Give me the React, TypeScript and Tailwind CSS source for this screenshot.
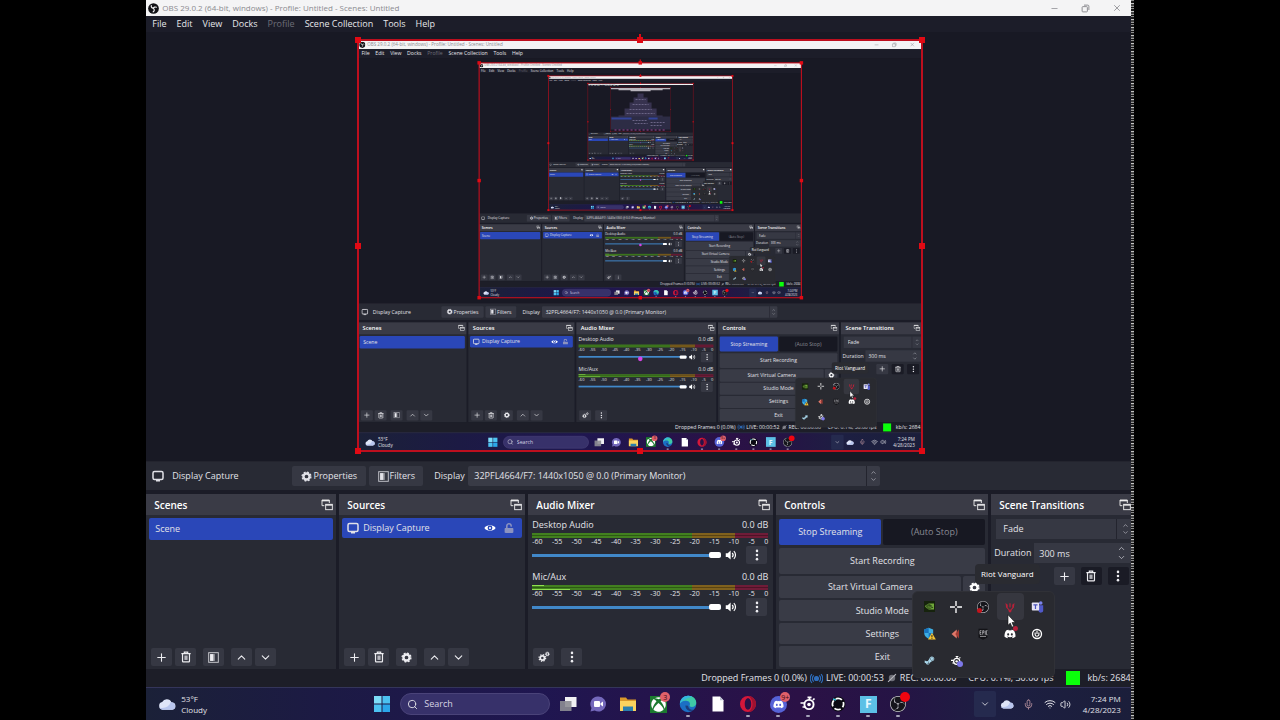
import type { ReactNode } from "react";
import { ChevronDown, ChevronUp, Mic, Minus, Plus, Search, Volume2, Wifi, X } from "lucide-react";
import { FaDiscord, FaSteamSymbol, FaUnlock, FaXbox } from "react-icons/fa";
import { SiNvidia, SiObsstudio } from "react-icons/si";

// how many times the display capture repeats inside itself
const MAX_LEVEL = 4;

const ticks = ["-60", "-55", "-50", "-45", "-40", "-35", "-30", "-25", "-20", "-15", "-10", "-5", "0"];

/* ---------- icons ---------- */

function GearIcon({ size = 11 }: { size?: number }) {
  return (
    <svg width={size} height={size} viewBox="0 0 16 16" fill="none" stroke="currentColor">
      <circle cx="8" cy="8" r="4.4" strokeWidth="3.4" />
      <circle cx="8" cy="8" r="6.4" strokeWidth="2" strokeDasharray="2.8 2.23" />
    </svg>
  );
}

function GearsIcon() {
  return (
    <svg width="12" height="12" viewBox="0 0 18 18" fill="none" stroke="currentColor">
      <circle cx="6.5" cy="10.5" r="3.2" strokeWidth="2.6" />
      <circle cx="6.5" cy="10.5" r="5" strokeWidth="1.8" strokeDasharray="2 1.93" />
      <circle cx="14" cy="4.5" r="2" strokeWidth="1.6" />
      <circle cx="14" cy="4.5" r="3" strokeWidth="1.2" strokeDasharray="1.2 1.16" />
    </svg>
  );
}

function MonitorIcon() {
  return (
    <svg width="12" height="12" viewBox="0 0 24 24" fill="none" stroke="currentColor" strokeWidth="3">
      <rect x="2" y="3" width="20" height="16" rx="3" />
      <path d="M8 21.5h8" />
    </svg>
  );
}

function FilterIcon() {
  return (
    <svg width="11" height="11" viewBox="0 0 16 16">
      <rect x="1" y="1" width="14" height="14" fill="none" stroke="currentColor" strokeWidth="1.4" opacity="0.8" />
      <rect x="3" y="3" width="5" height="10" fill="currentColor" />
      <rect x="8" y="3" width="2" height="10" fill="currentColor" opacity="0.5" />
    </svg>
  );
}

function TrashIcon() {
  return (
    <svg width="12" height="12" viewBox="0 0 18 18" fill="none" stroke="currentColor" strokeWidth="1.8">
      <path d="M2 4h14M6.5 3.5V1.8h5v1.7M3.8 4v11.2c0 .6.5 1 1 1h8.4c.5 0 1-.4 1-1V4" />
      <rect x="6.6" y="6.8" width="4.8" height="6.6" fill="currentColor" stroke="none" opacity="0.7" />
    </svg>
  );
}

function PopOutIcon() {
  return (
    <svg width="12" height="12" viewBox="0 0 18 18" fill="none" stroke="currentColor" strokeWidth="1.4" opacity="0.9">
      <path d="M5 10H1.5V1.5h11V6" />
      <path d="M1.5 2.5h11" strokeWidth="2" />
      <rect x="7" y="8" width="10" height="8" />
      <path d="M7 9h10" strokeWidth="2" />
    </svg>
  );
}

function DotsIcon() {
  return (
    <svg width="12" height="12" viewBox="0 0 16 16" fill="currentColor">
      <circle cx="8" cy="2.5" r="1.7" />
      <circle cx="8" cy="8" r="1.7" />
      <circle cx="8" cy="13.5" r="1.7" />
    </svg>
  );
}

function EyeIcon() {
  return (
    <svg width="12" height="12" viewBox="0 0 16 16">
      <path d="M0.5 8C3 3.2 13 3.2 15.5 8 13 12.8 3 12.8 .5 8z" fill="currentColor" />
      <circle cx="8" cy="8" r="3.2" fill="#2a47b8" />
      <circle cx="8" cy="8" r="1.4" fill="currentColor" />
    </svg>
  );
}

function SpeakerIcon() {
  return (
    <svg width="12" height="12" viewBox="0 0 16 16" fill="none" stroke="currentColor" strokeWidth="1.6">
      <path d="M1 5.5h2.6L7.5 2v12L3.6 10.5H1z" fill="currentColor" stroke="none" />
      <path d="M9.6 5.2c1.4 1.5 1.4 4.1 0 5.6M11.8 2.8c2.9 2.8 2.9 7.6 0 10.4" />
    </svg>
  );
}

function CloudIcon({ size }: { size: number }) {
  return (
    <svg width={size} height={size} viewBox="0 0 16 16">
      <path d="M4 13a3.4 3.4 0 0 1-.3-6.7A4.6 4.6 0 0 1 12 6.600 3.200 3.200 0 0 1 12.600 13z" fill="#dfe5f8" />
      <path d="M4 13a3.400 3.400 0 0 1-2.900-2c4 1.600 9-.4 10-4.500A3.300 3.300 0 0 1 12.600 13z" fill="#b9c6ee" />
    </svg>
  );
}

/* ---------- taskbar app icons ---------- */

function WindowsLogo() {
  return (
    <svg width="18" height="18" viewBox="0 0 18 18" fill="#4cc2f1">
      <rect x="1" y="1" width="7.500" height="7.500" fill="#7ddcf8" />
      <rect x="9.500" y="1" width="7.500" height="7.500" />
      <rect x="1" y="9.500" width="7.500" height="7.500" />
      <rect x="9.500" y="9.500" width="7.500" height="7.500" fill="#2ba6ea" />
    </svg>
  );
}

function TaskViewIcon() {
  return (
    <svg width="18" height="18" viewBox="0 0 18 18">
      <rect x="6" y="2" width="11.500" height="10" fill="#f1f1f3" />
      <rect x="1" y="6" width="11.500" height="10" fill="#8d8d93" opacity="0.9" />
    </svg>
  );
}

function ChatIcon() {
  return (
    <svg width="18" height="18" viewBox="0 0 18 18">
      <path d="M9.500 1.500a7.500 7.500 0 1 1-3.800 14L1.500 16.500l1-3.600A7.500 7.500 0 0 1 9.500 1.500z" fill="#7468bb" />
      <rect x="5" y="6" width="6" height="6" rx="1" fill="#fff" />
      <path d="M11.500 8.300 14 6.500v5l-2.500-1.800z" fill="#fff" />
    </svg>
  );
}

function FolderIcon() {
  return (
    <svg width="18" height="18" viewBox="0 0 18 18">
      <path d="M1 2.500h6l1.500 2H17V15H1z" fill="#d9982a" />
      <path d="M1 6h16v10H1z" fill="#fbd35e" />
      <path d="M4 16v-4.500h10V16z" fill="#2a7fae" />
    </svg>
  );
}

function EdgeIcon() {
  return (
    <svg width="18" height="18" viewBox="0 0 18 18">
      <circle cx="9" cy="9" r="8.300" fill="#1b6fc4" />
      <path d="M1 8.500C1.500 3.500 5 .7 9.200.7c4.800 0 8.100 3.300 8.100 7 0 2.600-2 4.300-4.400 4.300-1.700 0-2.600-.7-2.400-1.400.9-1 .8-4-2.300-4.600C5 5.400 2 6.500 1 8.500z" fill="#3fc9a6" />
      <path d="M1 8.500C1.500 3.500 5 .7 9.200.7c1.500 0 3 .4 4.200 1C9 2.500 4 4.500 1 8.500z" fill="#35b6e0" />
      <path d="M6.500 10.500c-.3 3 2.200 5.600 5.500 5.500 1.400 0 2.500-.5 3.400-1.200-2.900.4-6-.8-6.400-4.100z" fill="#1d1445" opacity="0.55" />
    </svg>
  );
}

function FileIcon() {
  return (
    <svg width="18" height="18" viewBox="0 0 18 18">
      <path d="M3.500 1.500h7.500l3.500 3.700v11.300h-11z" fill="#fff" />
      <path d="M11 1.500v3.700h3.500z" fill="#b9bfd0" />
    </svg>
  );
}

function OperaIcon() {
  return (
    <svg width="18" height="18" viewBox="0 0 18 18">
      <path fillRule="evenodd" d="M9 1a8 8 0 1 0 0 16A8 8 0 0 0 9 1zm0 2.300c2 0 3.200 2.500 3.200 5.700S11 14.700 9 14.700 5.800 12.200 5.800 9 7 3.300 9 3.300z" fill="#d4173a" />
      <path d="M9 1a8 8 0 0 1 0 16c2.500-1 4.500-4 4.500-8S11.500 2 9 1z" fill="#9d1230" />
    </svg>
  );
}

function SteelSeriesIcon({ size }: { size: number }) {
  return (
    <svg width={size} height={size} viewBox="0 0 18 18" fill="none" stroke="#fff">
      <circle cx="10" cy="9.500" r="4.600" strokeWidth="1.900" />
      <circle cx="10" cy="9.500" r="1.800" fill="#fff" stroke="none" />
      <path d="M8.500 2.300h4M10.500 2v3M1.500 8h4M3.500 12h3M14 5l1.500-1.500" strokeWidth="1.700" />
    </svg>
  );
}

function RingIcon() {
  return (
    <svg width="18" height="18" viewBox="0 0 18 18" fill="none">
      <circle cx="9" cy="9" r="7.500" fill="#0b0a12" />
      <circle cx="9" cy="9" r="5.600" stroke="#fff" strokeWidth="1.800" strokeDasharray="6.500 2.300" strokeDashoffset="3" />
      <path d="M4 4l3 1" stroke="#3fc1d8" strokeWidth="1.400" />
    </svg>
  );
}

function FortniteIcon() {
  return (
    <span className="flex size-[17px] items-center justify-center bg-[#5cc0e6] text-[12px] leading-none font-bold text-[#e6f8ff]">F</span>
  );
}

function ObsIcon({ size }: { size: number }) {
  return (
    <span className="flex rounded-full bg-[#15151b] text-[#c9c9cf]">
      <SiObsstudio size={size} />
    </span>
  );
}

function ObsWindowIcon() {
  return (
    <svg width="11" height="11" viewBox="0 0 16 16" fill="none" stroke="#f4f4f5" strokeWidth="1.700" strokeLinecap="round">
      <circle cx="8" cy="8" r="7.800" fill="#121216" stroke="none" />
      <path d="M4.800 3.800c-.4 2.200.8 3.500 2.600 3.700M12.200 6.200c-1.900-.9-3.700-.3-4.300 1.500M7.600 12.800c1.700-1.200 2-3 .8-4.400" />
    </svg>
  );
}

/* ---------- hidden icons flyout ---------- */

function VanguardIcon() {
  return (
    <svg width="12" height="12" viewBox="0 0 16 16" fill="#b92139">
      <path d="M2 2.500 5 5v4l3 3 3-3V5l3-2.500-.8 6L10 12v1.500L8 15.500 6 13.500V12L2.800 8.500z" />
      <path d="M7.200 3h1.600v5L8 9l-.8-1z" />
    </svg>
  );
}

function TeamsIcon() {
  return (
    <svg width="13" height="13" viewBox="0 0 16 16">
      <circle cx="12" cy="3.600" r="2.200" fill="#7b83eb" />
      <path d="M8 6.500h7v5.500a3 3 0 0 1-6 1z" fill="#5059c9" />
      <rect x="1" y="3" width="9" height="10" rx="1" fill="#e6e4f6" />
      <path d="M3 6h5M5.500 6v5" stroke="#4b53bc" strokeWidth="1.500" />
    </svg>
  );
}

function DefenderIcon() {
  return (
    <svg width="13" height="13" viewBox="0 0 16 16">
      <path d="M7 1 1.500 3v4.500c0 3.500 2.500 5.500 5.500 7 3-1.500 5.500-3.500 5.500-7V3z" fill="#3daee4" />
      <path d="M7 1v6.500H1.500V3zM7 7.500h5.500c0 3.500-2.500 5.500-5.500 7z" fill="#1873bd" />
      <path d="m11 7 4.800 8.500H6.200z" fill="#f5c433" />
      <path d="M11 9.800v3M11 13.600v1" stroke="#222" strokeWidth="1.200" />
    </svg>
  );
}

function EpicIcon() {
  return (
    <svg width="12" height="12" viewBox="0 0 16 16">
      <path d="M2 1h12v11.500L8 15.500l-6-3z" fill="#131317" />
      <path d="M6 3.500H4v5h2M4 6h1.700M7.600 9V3.500h1.600v2.700H7.600M11 3.500V9M14 3.500h-1.500V9H14M4 11.200h8" stroke="#b9b9be" strokeWidth="1" fill="none" />
    </svg>
  );
}

function PowerRingIcon() {
  return (
    <svg width="12" height="12" viewBox="0 0 16 16" fill="none" stroke="#fff">
      <circle cx="8" cy="8" r="6" strokeWidth="1.800" />
      <path d="M5.500 6v2.500a2.500 2.500 0 0 0 5 0V6M8 3.500V8" strokeWidth="1.500" />
    </svg>
  );
}

function CrosshairIcon() {
  return (
    <svg width="12" height="12" viewBox="0 0 16 16" stroke="#fff" strokeWidth="1.800">
      <path d="M8 0v6.500M8 9.500V16M0 8h6.500M9.500 8H16" />
    </svg>
  );
}

function CursorIcon() {
  return (
    <svg width="9" height="14" viewBox="0 0 9 14">
      <path d="M1 .8v10.400l2.300-2.100 1.700 4 1.700-.7-1.700-3.900h3.200z" fill="#fff" stroke="#111" strokeWidth="0.600" />
    </svg>
  );
}

const trayItems: { name: string; icon: ReactNode; hover?: boolean }[] = [
  { name: "NVIDIA Settings", icon: <span className="flex bg-[#16230d] p-px text-[#6fa83a]"><SiNvidia size={9} /></span> },
  { name: "Crosshair", icon: <CrosshairIcon /> },
  {
    name: "OBS",
    icon: (
      <span className="relative">
        <ObsIcon size={12} />
        <span className="absolute bottom-0 left-0 size-[5px] rounded-full bg-[#c3141c]" />
      </span>
    ),
  },
  { name: "Riot Vanguard", icon: <VanguardIcon />, hover: true },
  { name: "Microsoft Teams", icon: <TeamsIcon /> },
  { name: "Windows Security", icon: <DefenderIcon /> },
  {
    name: "Red arrow",
    icon: (
      <svg width="12" height="12" viewBox="0 0 16 16">
        <path d="M9 2v12L2 8z" fill="#e0796a" />
        <path d="M12 2v12L7 8z" fill="#a33a33" />
      </svg>
    ),
  },
  { name: "Epic Games", icon: <EpicIcon /> },
  {
    name: "Discord",
    icon: (
      <span className="relative">
        <FaDiscord size={12} color="#fff" />
        <span className="absolute -top-[2px] -right-[2px] size-[5px] rounded-full bg-[#b6203a]" />
      </span>
    ),
  },
  { name: "Power", icon: <PowerRingIcon /> },
  { name: "Steam", icon: <FaSteamSymbol size={11} color="#a9d6ea" /> },
  {
    name: "SteelSeries",
    icon: (
      <span className="relative">
        <SteelSeriesIcon size={12} />
        <span className="absolute -right-px bottom-0 size-[6px] rounded-full bg-[#7d78e8]" />
      </span>
    ),
  },
];

function TrayFlyout() {
  return (
    <div className="absolute right-[79px] bottom-[42px] grid grid-cols-5 rounded-md border border-[#303137] bg-[#292a30] px-[3px] pt-px pb-[3px]">
      {trayItems.map((item) => (
        <button
          key={item.name}
          aria-label={item.name}
          className={`flex size-[27px] items-center justify-center rounded ${item.hover ? "bg-[#36373f]" : ""}`}
        >
          {item.icon}
        </button>
      ))}
      <span className="absolute top-[22px] left-[94px]">
        <CursorIcon />
      </span>
    </div>
  );
}

/* ---------- shared pieces ---------- */

function ToolButton({ label, dark, children }: { label: string; dark?: boolean; children: ReactNode }) {
  return (
    <button
      aria-label={label}
      className={`flex h-[18px] w-[21px] items-center justify-center rounded-xs text-[#ededf1] ${dark ? "bg-[#1a1b25]" : "bg-[#363843]"}`}
    >
      {children}
    </button>
  );
}

function Stepper() {
  return (
    <span className="pointer-events-none flex flex-col text-[#c9cad2]">
      <ChevronUp size={7} />
      <ChevronDown size={7} />
    </span>
  );
}

function Dock({ title, className, children }: { title: string; className: string; children: ReactNode }) {
  return (
    <section className={`flex flex-col overflow-hidden bg-[#282a34] ${className}`}>
      <header className="flex h-[21px] shrink-0 items-center justify-between bg-[#3a3b46] pr-[3px] pl-2 text-[10px] font-semibold text-white">
        <h2 className="whitespace-nowrap">{title}</h2>
        <PopOutIcon />
      </header>
      {children}
    </section>
  );
}

function MixerChannel({ name, active }: { name: string; active?: boolean }) {
  return (
    <div className="h-[52px]">
      <div className="flex h-[13px] items-center justify-between">
        <span>{name}</span>
        <span>0.0 dB</span>
      </div>
      <div className="mt-[2px] flex h-[5px] flex-col justify-between bg-[linear-gradient(90deg,#42801f_0_68%,#80611d_68%_86%,#701c38_86%)]">
        <div className={active ? "h-px w-[5%] bg-[#8fe050]" : "h-px"} />
        <div className="h-px bg-black/30" />
        <div className={active ? "h-px w-[16%] bg-[#8fe050]" : "h-px"} />
      </div>
      <div className="flex h-2 justify-between text-[7px] leading-[8px]">
        {ticks.map((t) => (
          <span key={t}>{t}</span>
        ))}
      </div>
      <div className="flex h-[18px] items-center">
        <input
          type="range"
          aria-label={`${name} volume`}
          defaultValue={100}
          className="h-[3px] w-[189px] appearance-none bg-[#4188c9] [&::-webkit-slider-thumb]:h-[6px] [&::-webkit-slider-thumb]:w-3 [&::-webkit-slider-thumb]:appearance-none [&::-webkit-slider-thumb]:rounded-xs [&::-webkit-slider-thumb]:bg-white"
        />
        <button aria-label={`Mute ${name}`} className="ml-1 text-white">
          <SpeakerIcon />
        </button>
        <span className="mr-px ml-auto">
          <ToolButton label={`${name} options`}>
            <DotsIcon />
          </ToolButton>
        </span>
      </div>
    </div>
  );
}

function ControlButton({ className, label, children }: { className: string; label?: string; children: ReactNode }) {
  return (
    <button aria-label={label} className={`flex items-center justify-center rounded-xs ${className}`}>
      {children}
    </button>
  );
}

/* ---------- OBS window ---------- */

function TitleBar() {
  return (
    <div className="flex h-4 shrink-0 items-center bg-[#f4f4f5] pl-[2px] text-[8px] text-[#8b8b90]">
      <span className="mr-[3px]">
        <ObsWindowIcon />
      </span>
      <span>OBS 29.0.2 (64-bit, windows) - Profile: Untitled - Scenes: Untitled</span>
      <div className="mr-3 ml-auto flex items-center gap-[22px]">
        <button aria-label="Minimize"><Minus size={9} /></button>
        <button aria-label="Restore">
          <svg width="9" height="9" viewBox="0 0 12 12" fill="none" stroke="currentColor" strokeWidth="1.300">
            <rect x="1.500" y="3.500" width="7" height="7" rx="1" />
            <path d="M4 1.500h5c1 0 1.500.5 1.500 1.500v5" />
          </svg>
        </button>
        <button aria-label="Close"><X size={10} /></button>
      </div>
    </div>
  );
}

function MenuBar() {
  const items = ["File", "Edit", "View", "Docks", "Profile", "Scene Collection", "Tools", "Help"];
  return (
    <nav className="flex h-4 shrink-0 items-center gap-[10px] bg-[#1c1d29] pl-[6px]">
      {items.map((item) => (
        <button key={item} disabled={item === "Profile"} className={item === "Profile" ? "text-[#6d6e78]" : "text-[#e6e6ea]"}>
          {item}
        </button>
      ))}
    </nav>
  );
}

const handles = [
  "-top-[3px] -left-[3px]",
  "-top-[3px] left-1/2 -translate-x-1/2",
  "-top-[3px] -right-[3px]",
  "top-1/2 -left-[3px] -translate-y-1/2",
  "top-1/2 -right-[3px] -translate-y-1/2",
  "-bottom-[3px] -left-[3px]",
  "-bottom-[3px] left-1/2 -translate-x-1/2",
  "-bottom-[3px] -right-[3px]",
];

// the far end of the tunnel, where the windows blur into steps
function TunnelEnd() {
  return (
    <svg className="h-full w-full" viewBox="0 0 60 44" preserveAspectRatio="none">
      <rect width="60" height="44" fill="#1a1925" />
      <path d="M0 0h60v1.500H52v1H40v1H20v-1H8v-1H0z" fill="#b9b5bd" />
      <path d="M27 6h6v4h4v5h4v6h5v7h6v8H8v-8h6v-7h5v-6h4v-5h4z" fill="#37324f" />
      <path d="M0 29h60v13H0z" fill="#2d2c45" />
      <path d="M1 30h20v2H1zM38 30h9v2h-9z" fill="#33449a" />
      <path d="M25 12h10M22 17h16M19 22h22M16 26h28M22 33h15M24 36h13M40 35h14M40 38h12" stroke="#6a6485" strokeWidth="1" strokeDasharray="2 1" />
      <path d="M4 42.500h52" stroke="#a0459a" strokeWidth="1" strokeDasharray="2 2" />
    </svg>
  );
}

function Preview({ level }: { level: number }) {
  return (
    <div className="flex min-h-0 flex-1 items-start justify-center bg-[#181924] pt-2">
      <div className="relative aspect-[48/35] w-4/7">
        <div className="absolute inset-0 overflow-hidden">
          {level < MAX_LEVEL ? (
            <div inert className="absolute top-0 left-0 h-[175%] w-[175%] origin-top-left scale-[0.5714]">
              <Screen level={level + 1} />
            </div>
          ) : (
            <TunnelEnd />
          )}
        </div>
        <div className="absolute -inset-px border-2 border-[#bd0f1e]" />
        {handles.map((pos) => (
          <span key={pos} className={`absolute size-[6px] bg-[#e10a14] ${pos}`} />
        ))}
        <span className="absolute -top-[6px] left-1/2 h-1 w-[2px] -translate-x-1/2 bg-[#e10a14]" />
      </div>
    </div>
  );
}

function ContextBar() {
  return (
    <div className="flex h-[29px] shrink-0 items-center border-t border-[#23242e] bg-[#282a34] pl-[6px]">
      <MonitorIcon />
      <span className="ml-2 w-[120px]">Display Capture</span>
      <button className="flex h-5 w-[74px] items-center justify-center gap-px rounded-xs bg-[#363843]">
        <GearIcon /> Properties
      </button>
      <button className="ml-[3px] flex h-5 w-[54px] items-center justify-center gap-px rounded-xs bg-[#363843]">
        <FilterIcon /> Filters
      </button>
      <label className="ml-[11px] flex items-center">
        <span className="w-[34px]">Display</span>
        <span className="relative flex h-5 w-[412px] items-center rounded-xs bg-[#393b46]">
          <select className="h-full w-full appearance-none pl-[6px] outline-none">
            <option>32PFL4664/F7: 1440x1050 @ 0.0 (Primary Monitor)</option>
          </select>
          <span className="absolute right-0 flex h-full w-[14px] items-center justify-center border-l border-[#23242e]">
            <Stepper />
          </span>
        </span>
      </label>
    </div>
  );
}

function Docks() {
  return (
    <div className="mt-1 flex h-[175px] shrink-0 gap-[3px]">
      <Dock title="Scenes" className="w-[190px] shrink-0">
        <button className="mx-[3px] mt-[3px] h-[22px] rounded-xs bg-[#2a47b8] pl-[6px] text-left">Scene</button>
        <div className="mt-auto mb-[3px] flex gap-[3px] pl-[5px]">
          <ToolButton label="Add scene"><Plus size={13} /></ToolButton>
          <ToolButton label="Remove scene"><TrashIcon /></ToolButton>
          <span className="w-px" />
          <ToolButton label="Scene filters"><FilterIcon /></ToolButton>
          <span className="w-px" />
          <ToolButton label="Move scene up"><ChevronUp size={13} /></ToolButton>
          <ToolButton label="Move scene down"><ChevronDown size={13} /></ToolButton>
        </div>
      </Dock>

      <Dock title="Sources" className="w-[186px] shrink-0">
        <div className="mx-[3px] mt-[3px] flex h-5 items-center rounded-xs bg-[#2a47b8] pr-2 pl-[5px]">
          <MonitorIcon />
          <span className="ml-1">Display Capture</span>
          <button aria-label="Toggle visibility" className="mr-2 ml-auto text-white"><EyeIcon /></button>
          <button aria-label="Lock source" className="text-[#8c93c0]"><FaUnlock size={10} /></button>
        </div>
        <div className="mt-auto mb-[3px] flex gap-[3px] pl-[5px]">
          <ToolButton label="Add source"><Plus size={13} /></ToolButton>
          <ToolButton label="Remove source"><TrashIcon /></ToolButton>
          <span className="w-px" />
          <ToolButton label="Source properties"><GearIcon /></ToolButton>
          <span className="w-px" />
          <ToolButton label="Move source up"><ChevronUp size={13} /></ToolButton>
          <ToolButton label="Move source down"><ChevronDown size={13} /></ToolButton>
        </div>
      </Dock>

      <Dock title="Audio Mixer" className="w-[245px] shrink-0">
        <div className="pt-[3px] pr-[5px] pl-1">
          <MixerChannel name="Desktop Audio" />
          <MixerChannel name="Mic/Aux" active />
        </div>
        <div className="mt-auto mb-[3px] flex gap-[7px] pl-[5px]">
          <ToolButton label="Advanced audio properties"><GearsIcon /></ToolButton>
          <ToolButton label="Mixer options"><DotsIcon /></ToolButton>
        </div>
      </Dock>

      <Dock title="Controls" className="w-[212px] shrink-0">
        <div className="flex flex-col gap-[2px] px-[3px] pt-1">
          <div className="flex gap-[2px]">
            <ControlButton className="h-[26px] flex-1 bg-[#2a47b8]">Stop Streaming</ControlButton>
            <ControlButton className="h-[26px] flex-1 bg-[#171822] text-[#8a8b94]">(Auto Stop)</ControlButton>
          </div>
          <ControlButton className="mt-px h-[26px] bg-[#393b46]">Start Recording</ControlButton>
          <div className="flex gap-[2px]">
            <ControlButton className="h-[22px] flex-1 bg-[#393b46]">Start Virtual Camera</ControlButton>
            <ControlButton label="Virtual camera settings" className="h-[22px] w-[22px] bg-[#393b46] text-white"><GearIcon /></ControlButton>
          </div>
          <ControlButton className="h-[21px] bg-[#393b46]">Studio Mode</ControlButton>
          <ControlButton className="h-[21px] bg-[#393b46]">Settings</ControlButton>
          <ControlButton className="h-[21px] bg-[#393b46]">Exit</ControlButton>
        </div>
      </Dock>

      <Dock title="Scene Transitions" className="min-w-0 flex-1">
        <div className="relative mt-1 ml-[5px] flex h-5 items-center bg-[#363843]">
          <select aria-label="Transition" className="h-full w-full appearance-none pl-[7px] outline-none">
            <option>Fade</option>
          </select>
          <span className="absolute right-0 flex h-full w-[18px] items-center justify-center border-l border-[#23242e]">
            <Stepper />
          </span>
        </div>
        <label className="mt-1 ml-[3px] flex h-5 items-center">
          <span className="w-10">Duration</span>
          <span className="relative flex h-full flex-1 items-center bg-[#363843]">
            <input defaultValue="300 ms" className="h-full w-full min-w-0 pl-[5px] outline-none" />
            <span className="absolute right-2 flex flex-col text-[#c9cad2]">
              <ChevronUp size={9} />
              <ChevronDown size={9} />
            </span>
          </span>
        </label>
        <div className="mt-1 mr-[5px] flex justify-end gap-[6px]">
          <ToolButton label="Add transition"><Plus size={13} /></ToolButton>
          <ToolButton label="Remove transition" dark><TrashIcon /></ToolButton>
          <ToolButton label="Transition options" dark><DotsIcon /></ToolButton>
        </div>
      </Dock>
    </div>
  );
}

function StatusBar({ level }: { level: number }) {
  return (
    <div className="flex h-[18px] shrink-0 items-center justify-end bg-[#1d1e28] pr-[3px] whitespace-nowrap">
      <span>Dropped Frames 0 (0.0%)</span>
      <svg className="mx-[3px]" width="13" height="11" viewBox="0 0 16 14" fill="none" stroke="#2f6dbb" strokeWidth="1.500">
        <circle cx="8" cy="7" r="2.500" fill="#2f6dbb" />
        <path d="M4.500 3a5.500 5.500 0 0 0 0 8M11.500 3a5.500 5.500 0 0 1 0 8M2.200 1.500a8 8 0 0 0 0 11M13.800 1.500a8 8 0 0 1 0 11" />
      </svg>
      <span>{level === 0 ? "LIVE: 00:00:53" : "LIVE: 00:00:52"}</span>
      <svg className="mx-[3px]" width="10" height="10" viewBox="0 0 14 14">
        <circle cx="7" cy="7" r="4.500" fill="#6e6f78" />
        <path d="M1.500 12.500l11-11" stroke="#b6b7bf" strokeWidth="1.500" />
      </svg>
      <span>REC: 00:00:00</span>
      <span className="ml-3">CPU: 0.1%, 30.00 fps</span>
      <span className="ml-3 size-[14px] bg-[#0bff0b]" />
      <span className="ml-2">kb/s: 2684</span>
    </div>
  );
}

const apps: { name: string; icon: ReactNode; open?: boolean; badge?: string }[] = [
  { name: "Task View", icon: <TaskViewIcon /> },
  { name: "Chat", icon: <ChatIcon /> },
  { name: "File Explorer", icon: <FolderIcon /> },
  { name: "Xbox", icon: <span className="flex bg-[#1c7a30] p-px text-white"><FaXbox size={15} /></span>, badge: "3" },
  { name: "Edge", icon: <EdgeIcon />, open: true },
  { name: "Notepad", icon: <FileIcon /> },
  { name: "Opera", icon: <OperaIcon />, open: true },
  {
    name: "Discord",
    icon: <span className="flex rounded-full bg-[#5662d6] p-[3px] text-white"><FaDiscord size={11} /></span>,
    open: true,
    badge: "9+",
  },
  { name: "SteelSeries GG", icon: <SteelSeriesIcon size={18} />, open: true },
  { name: "Ring", icon: <RingIcon />, open: true },
  { name: "Fortnite", icon: <FortniteIcon />, open: true },
  { name: "OBS Studio", icon: <ObsIcon size={16} />, open: true, badge: " " },
];

function Taskbar() {
  return (
    <div className="flex h-[33px] shrink-0 items-center border-t border-[#34355a] bg-[linear-gradient(90deg,#1b2138_0%,#1c1a44_18%,#1f1650_40%,#2b1146_66%,#251445_76%,#1d1f42_86%,#1b1e3a_100%)] pl-3">
      <div className="flex w-[215px] items-center gap-[5px] text-[8px] leading-[11px]">
        <CloudIcon size={18} />
        <div>
          <div>53°F</div>
          <div>Cloudy</div>
        </div>
      </div>
      <button aria-label="Start"><WindowsLogo /></button>
      <label className="ml-[9px] flex h-[22px] w-[150px] items-center gap-[6px] rounded-full border border-[#4a4379] bg-[#37316a] pl-[6px]">
        <Search size={11} />
        <input placeholder="Search" className="w-[100px] outline-none placeholder:text-[#d5d3e4]" />
      </label>
      <div className="ml-[3px] flex">
        {apps.map((app) => (
          <button key={app.name} aria-label={app.name} className="relative flex h-[30px] w-[30px] items-center justify-center">
            {app.icon}
            {app.badge && (
              <span
                className={`absolute top-[3px] right-[3px] flex h-[10px] min-w-[10px] items-center justify-center rounded-full text-[7px] leading-none ${app.badge === " " ? "bg-[#f00510]" : "bg-[#e0606a] text-[#3a0a14]"}`}
              >
                {app.badge}
              </span>
            )}
            {app.open && <span className="absolute bottom-[2px] h-[2px] w-1 rounded-full bg-[#a5a3b8]" />}
          </button>
        ))}
      </div>
      <div className="mr-[13px] ml-auto flex items-center">
        <button aria-label="Show hidden icons" className="flex h-[26px] w-[22px] items-center justify-center rounded-xs bg-[#252a4e]">
          <ChevronDown size={10} />
        </button>
        <span className="ml-1"><CloudIcon size={14} /></span>
        <Mic size={11} className="ml-[9px] text-[#b58f9c]" />
        <Wifi size={12} className="ml-[10px]" />
        <Volume2 size={11} className="ml-1" />
        <div className="ml-3 text-right text-[8px] leading-[11px]">
          <div>7:24 PM</div>
          <div>4/28/2023</div>
        </div>
      </div>
    </div>
  );
}

function Screen({ level }: { level: number }) {
  return (
    <div className="relative flex h-full w-full flex-col overflow-hidden bg-[#1b1c27] text-[9px] leading-[12px] text-[#e2e2e8]">
      <TitleBar />
      <MenuBar />
      <Preview level={level} />
      <ContextBar />
      <Docks />
      <StatusBar level={level} />
      <Taskbar />
      <div className="absolute right-[94px] bottom-[136px] flex h-5 items-center rounded bg-[#2a2b31] px-[6px] text-[8px] text-white">
        Riot Vanguard
      </div>
      <TrayFlyout />
      {level > 0 && <span className="absolute top-[77%] left-1/2 size-2 -translate-x-1/2 rounded-full bg-[#d544e8]" />}
    </div>
  );
}

export default function App() {
  return (
    <main className="flex h-screen justify-center overflow-hidden bg-black font-['Open_Sans','Noto_Sans',sans-serif]">
      <div className="relative aspect-[48/35] h-full">
        <Screen level={0} />
        {/* noisy edge of the video frame */}
        <div className="absolute top-0 right-0 h-full w-[3px] bg-[repeating-linear-gradient(180deg,#8d8d8d_0_1px,#1a1a1a_1px_3px,#c4c4c4_3px_4px,#444_4px_6px,#9a9a9a_6px_7px,#111_7px_8px)]" />
      </div>
    </main>
  );
}
